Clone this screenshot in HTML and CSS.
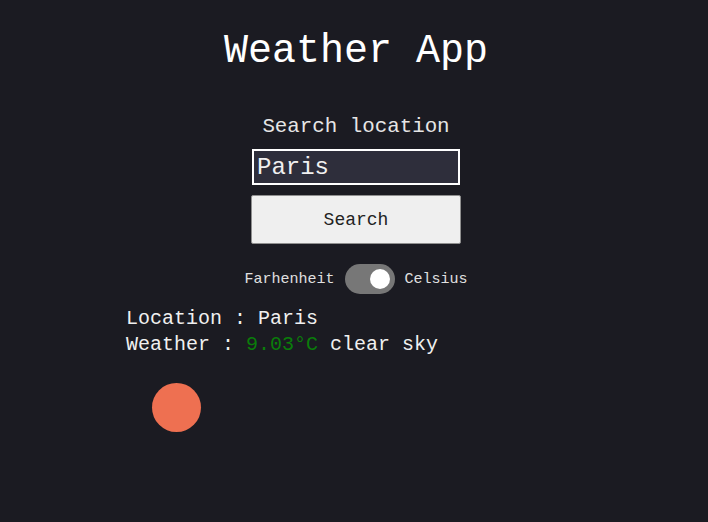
FILE: index.html
```html
<!DOCTYPE html>
<html lang="en">
<head>
<meta charset="utf-8">
<title>Weather App</title>
<link rel="stylesheet" href="styles.css">
</head>
<body>
<main class="app">
  <h1 class="title">Weather App</h1>
  <form class="search">
    <label class="search-label" for="loc">Search location</label>
    <input class="search-input" id="loc" type="text" value="Paris">
    <button class="search-btn" type="button">Search</button>
  </form>
  <div class="units">
    <span class="unit">Farhenheit</span>
    <span class="switch"><span class="knob"></span></span>
    <span class="unit">Celsius</span>
  </div>
  <section class="result">
    <p class="line">Location : Paris</p>
    <p class="line">Weather : <span class="temp">9.03°C</span> clear sky</p>
    <div class="sun"></div>
  </section>
</main>
</body>
</html>
```

FILE: styles.css
```css
html, body {
  margin: 0;
  padding: 0;
  background: #1b1b22;
  height: 100%;
}
body {
  font-family: "Liberation Mono", "DejaVu Sans Mono", monospace;
  color: #f0f0f0;
}
.app {
  display: flex;
  flex-direction: column;
  align-items: center;
  padding-left: 4px;
}
.title {
  margin: 28px 0 0;
  font-size: 40px;
  line-height: 48px;
  font-weight: normal;
  color: #ffffff;
}
.search {
  display: flex;
  flex-direction: column;
  align-items: center;
  margin-top: 39px;
}
.search-label {
  font-size: 20.8px;
  line-height: 24px;
  color: #e6e6e6;
}
.search-input {
  box-sizing: border-box;
  margin-top: 10px;
  width: 208px;
  height: 36px;
  border: 2px solid #ffffff;
  background: #2e2e3b;
  color: #f0f0f0;
  font-family: inherit;
  font-size: 24px;
  padding: 0 3px;
  outline: none;
}
.search-btn {
  box-sizing: border-box;
  margin-top: 10px;
  width: 210px;
  height: 49px;
  background: #efefef;
  border: 1px solid #8f8f8f;
  border-radius: 2px;
  color: #222;
  font-family: inherit;
  font-size: 18px;
}
.units {
  display: flex;
  align-items: center;
  gap: 10px;
  margin-top: 20px;
}
.unit {
  font-size: 15px;
  color: #e0e0e0;
}
.switch {
  display: flex;
  align-items: center;
  justify-content: flex-end;
  box-sizing: border-box;
  width: 50px;
  height: 30px;
  padding: 0 5px;
  border-radius: 15px;
  background: #777777;
}
.knob {
  width: 20px;
  height: 20px;
  border-radius: 50%;
  background: #ffffff;
}
.result {
  align-self: stretch;
  display: flex;
  flex-direction: column;
  padding-left: 122px;
  margin-top: 12px;
}
.line {
  margin: 0;
  font-size: 20px;
  line-height: 26px;
  color: #f0f0f0;
}
.temp {
  color: #0a7d0a;
}
.sun {
  margin: 25px 0 0 26px;
  width: 49px;
  height: 49px;
  border-radius: 50%;
  background: #ee7051;
}
```
